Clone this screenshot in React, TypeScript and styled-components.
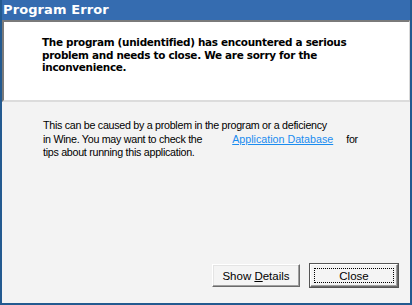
import styled, { createGlobalStyle } from 'styled-components';

const GlobalStyle = createGlobalStyle`
  html, body {
    margin: 0;
    padding: 0;
    background: #ffffff;
  }
`;

const Frame = styled.div`
  width: 412px;
  height: 305px;
  box-sizing: border-box;
  background: #356cb0;
  border-left: 2px solid #235a90;
  border-right: 2px solid #235a90;
  border-bottom: 2px solid #235a90;
  display: flex;
  flex-direction: column;
  font-family: 'DejaVu Sans', Tahoma, sans-serif;
`;

const TitleBar = styled.div`
  height: 20px;
  line-height: 19px;
  padding-left: 1px;
  color: #ffffff;
  font-weight: bold;
  font-size: 13px;
  letter-spacing: 0.1px;
`;

const Body = styled.div`
  flex: 1;
  background: #f3f3f3;
  display: flex;
  flex-direction: column;
`;

const MessagePanel = styled.div`
  height: 82px;
  box-sizing: border-box;
  background: #ffffff;
  border-top: 2px solid #7a7a7a;
  border-left: 2px solid #7a7a7a;
  border-right: 1px solid #d8d8d8;
  border-bottom: 2px solid #dcdcdc;
  padding: 14px 0 0 38px;
`;

const Headline = styled.p`
  margin: 0;
  font-size: 10.45px;
  font-weight: bold;
  line-height: 12.6px;
  letter-spacing: -0.3px;
  color: #000000;
  white-space: nowrap;
`;

const Info = styled.p`
  margin: 0;
  padding: 17px 0 0 41px;
  font-family: 'Liberation Sans', Arial, sans-serif;
  font-size: 10.7px;
  line-height: 13.5px;
  letter-spacing: -0.28px;
  color: #000000;
  white-space: nowrap;
`;

const DbLink = styled.a`
  display: inline-block;
  width: 114px;
  margin-left: 30px;
  color: #1a8cf0;
  text-decoration: underline;
  letter-spacing: 0;
  cursor: pointer;
`;

const ButtonRow = styled.div`
  margin-top: auto;
  display: flex;
  justify-content: flex-end;
  gap: 10px;
  padding: 0 12px 16px 0;
`;

const Button = styled.button<{ $default?: boolean }>`
  width: 88px;
  height: 23px;
  box-sizing: border-box;
  font-family: 'Liberation Sans', Arial, sans-serif;
  font-size: 11.5px;
  color: #000000;
  background: #f4f4f4;
  padding: 0;
  border: 1px solid;
  border-color: #ffffff #6a6a6a #6a6a6a #ffffff;
  box-shadow: ${({ $default }) =>
    $default
      ? 'inset -1px -1px 0 #a0a0a0, 0 0 0 1px #555555'
      : 'inset -1px -1px 0 #a0a0a0, inset 1px 1px 0 #e4e4e4'};
  outline: ${({ $default }) => ($default ? '1px dotted #000000' : 'none')};
  outline-offset: -5px;
`;

export default function App() {
  return (
    <>
      <GlobalStyle />
      <Frame>
        <TitleBar>Program Error</TitleBar>
        <Body>
          <MessagePanel>
            <Headline>
              The program (unidentified) has encountered a serious
              <br />
              problem and needs to close. We are sorry for the
              <br />
              inconvenience.
            </Headline>
          </MessagePanel>
          <Info>
            This can be caused by a problem in the program or a deficiency
            <br />
            in Wine. You may want to check the
            <DbLink>Application Database</DbLink>for
            <br />
            tips about running this application.
          </Info>
          <ButtonRow>
            <Button>
              Show <u>D</u>etails
            </Button>
            <Button $default>Close</Button>
          </ButtonRow>
        </Body>
      </Frame>
    </>
  );
}
